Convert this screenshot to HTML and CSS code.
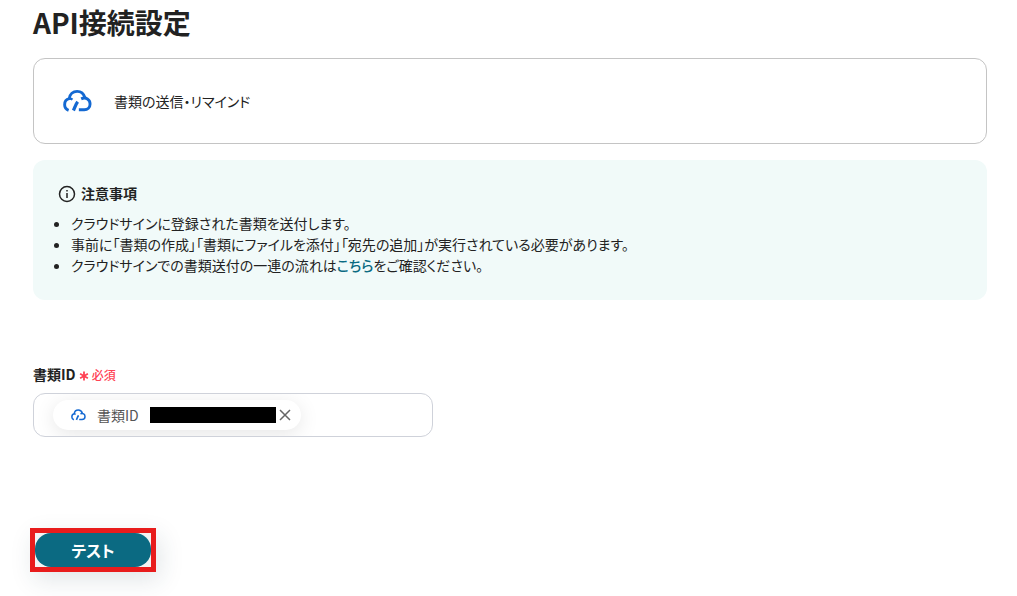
FILE: index.html
```
<!DOCTYPE html>
<html lang="ja">
<head>
    <meta charset="UTF-8">
    <meta name="viewport" content="width=device-width, initial-scale=1.0">
    <title>API接続設定</title>
    <link rel="stylesheet" href="styles.css">
</head>
<body>
    <svg class="symbols" aria-hidden="true">
        <symbol id="cloud" viewBox="0 0 30 24">
            <g fill="none" stroke="currentColor" stroke-width="3">
                <path d="M5.8 21.6C3.2 20.6 1.7 18.4 1.7 15.8C1.7 12.4 3.8 10.2 6.4 9.6C7 5 10.4 2 14.6 2C18.4 2 21.4 4.2 22.6 8.4"/>
                <path d="M6 9.7C7.6 9.4 8.8 9.8 9.8 10.6" stroke-width="2.4"/>
                <path d="M18.8 9.8C23.8 7.4 28 10.6 28 15C28 18.8 25.4 21 22 21H16.4"/>
                <path d="M15.2 12.8C13.2 15.2 12.4 18.4 10.8 21.8" stroke-width="3.4"/>
            </g>
        </symbol>
    </svg>

    <main class="container">
        <h1 class="page-title">API接続設定</h1>

        <section class="action-card">
            <svg class="action-icon"><use href="#cloud"/></svg>
            <p class="action-name">書類の送信・リマインド</p>
        </section>

        <section class="notice">
            <h2 class="notice-title">
                <svg class="info-icon" viewBox="0 0 18 18">
                    <circle cx="9" cy="9" r="7.5" fill="none" stroke="currentColor" stroke-width="1.5"/>
                    <path d="M9 8V13M9 5V6.5" stroke="currentColor" stroke-width="1.5"/>
                </svg>
                注意事項
            </h2>
            <ul class="notice-list">
                <li>クラウドサインに登録された書類を送付します。</li>
                <li>事前に「書類の作成」「書類にファイルを添付」「宛先の追加」が実行されている必要があります。</li>
                <li>クラウドサインでの書類送付の一連の流れは<a href="#">こちら</a>をご確認ください。</li>
            </ul>
        </section>

        <form class="settings-form">
            <label class="field-label" for="documentId">書類ID <span class="required"><svg class="asterisk" viewBox="0 0 10 10"><path d="M5 0.5V9.5M1.1 2.8L8.9 7.2M8.9 2.8L1.1 7.2" stroke="currentColor" stroke-width="1.8"/></svg>必須</span></label>
            <div class="field">
                <div class="chip">
                    <svg class="chip-icon"><use href="#cloud"/></svg>
                    <span class="chip-name">書類ID</span>
                    <span class="chip-value"></span>
                    <button class="chip-remove" type="button" aria-label="削除">
                        <svg viewBox="0 0 12 12"><path d="M1 1L11 11M11 1L1 11" stroke="currentColor" stroke-width="1.5"/></svg>
                    </button>
                </div>
                <input class="field-input" id="documentId" type="text">
            </div>

            <div class="highlight">
                <button class="test-button" type="button">テスト</button>
            </div>
        </form>
    </main>
</body>
</html>
```

FILE: styles.css
```
* {
    margin: 0;
    padding: 0;
    box-sizing: border-box;
}

body {
    font-family: "Noto Sans CJK JP", sans-serif;
    font-size: 14px;
    line-height: 21px;
    font-feature-settings: "palt";
    color: #222222;
    background: #ffffff;
}

.symbols {
    position: absolute;
    width: 0;
    height: 0;
}

.container {
    padding: 1px 30px 24px 33px;
}

.page-title {
    font-size: 28px;
    font-weight: 700;
    line-height: 42px;
    margin-bottom: 15px;
}

.action-card {
    display: flex;
    align-items: center;
    gap: 22px;
    min-height: 86px;
    padding: 28px 29px;
    border: 1px solid #c4c4c4;
    border-radius: 12px;
}

.action-icon {
    width: 29px;
    height: 24px;
    color: #1469d2;
}

.notice {
    margin-top: 16px;
    padding: 23px 24px 24px;
    border-radius: 12px;
    background: #f1faf9;
}

.notice-title {
    display: flex;
    align-items: center;
    gap: 5px;
    padding-left: 1px;
    font-size: 14px;
    font-weight: 700;
    margin-bottom: 9px;
}

.info-icon {
    width: 18px;
    height: 18px;
}

.notice-list {
    padding-left: 14px;
}

.notice-list a {
    color: #0b6a82;
    font-weight: 500;
    text-decoration: none;
}

.settings-form {
    margin-top: 64px;
}

.field-label {
    display: block;
    font-weight: 700;
    margin-bottom: 8px;
}

.required {
    font-size: 12px;
    font-weight: 500;
    color: #ff4255;
}

.asterisk {
    width: 10px;
    height: 10px;
    margin-right: 3px;
    vertical-align: -1px;
}

.field {
    display: flex;
    align-items: center;
    max-width: 400px;
    height: 44px;
    padding: 0 19px;
    border: 1px solid #cfd2da;
    border-radius: 12px;
    overflow: hidden;
}

.chip {
    display: flex;
    align-items: center;
    height: 30px;
    padding: 0 10px 0 18px;
    border-radius: 15px;
    color: #555555;
    background: #ffffff;
    box-shadow: 0 4px 20px rgba(0, 0, 0, 0.1);
}

.chip-icon {
    width: 15px;
    height: 12px;
    margin-right: 11px;
    color: #1469d2;
}

.chip-value {
    width: 126px;
    height: 16px;
    margin-left: 11px;
    background: #000000;
}

.chip-remove {
    width: 12px;
    height: 12px;
    margin-left: 3px;
    border: none;
    color: #666666;
    background: none;
    cursor: pointer;
}

.chip-remove svg {
    display: block;
}

.field-input {
    flex: 1;
    min-width: 0;
    border: none;
    outline: none;
    font: inherit;
    background: none;
}

.highlight {
    width: 126px;
    margin: 91px 0 0 -3px;
    border: 5px solid #e81c1c;
    background: #f3f3f3;
    box-shadow: 4px 8px 24px rgba(30, 60, 80, 0.13);
}

.test-button {
    display: block;
    width: 100%;
    height: 34px;
    border: none;
    border-radius: 16px;
    font-family: inherit;
    font-size: 16px;
    font-weight: 700;
    font-feature-settings: inherit;
    color: #ffffff;
    background: #0b6a82;
    cursor: pointer;
}
```
